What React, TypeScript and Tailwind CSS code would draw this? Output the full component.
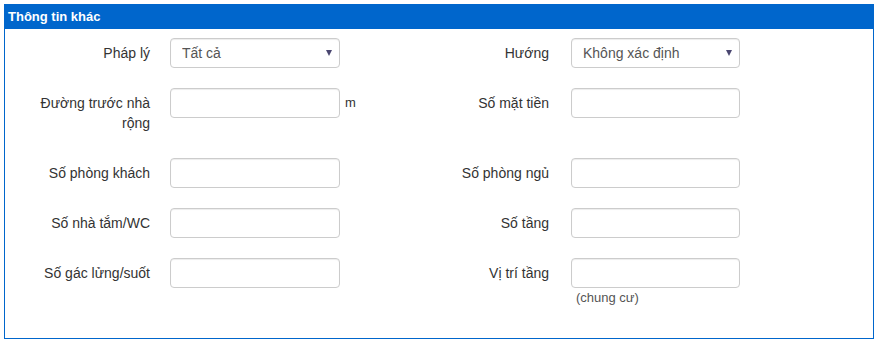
import React from 'react';

type Field = {
  label: string;
  kind?: 'select' | 'input';
  value?: string;
  suffix?: string;
  help?: string;
};

const rows: [Field, Field][] = [
  [
    { label: 'Pháp lý', kind: 'select', value: 'Tất cả' },
    { label: 'Hướng', kind: 'select', value: 'Không xác định' },
  ],
  [{ label: 'Đường trước nhà rộng', suffix: 'm' }, { label: 'Số mặt tiền' }],
  [{ label: 'Số phòng khách' }, { label: 'Số phòng ngủ' }],
  [{ label: 'Số nhà tắm/WC' }, { label: 'Số tầng' }],
  [{ label: 'Số gác lửng/suốt' }, { label: 'Vị trí tầng', help: '(chung cư)' }],
];

function Control({ field, width }: { field: Field; width: string }) {
  if (field.kind === 'select') {
    return (
      <div className={`relative h-[30px] ${width}`}>
        <select
          defaultValue={field.value}
          className="h-full w-full appearance-none rounded-[4px] border border-[#cccccc] bg-white pl-[11px] pr-6 text-[14px] leading-[20px] text-[#555555] shadow-[inset_0_1px_1px_rgba(0,0,0,0.075)] outline-none"
        >
          <option>{field.value}</option>
        </select>
        <span className="pointer-events-none absolute right-[8px] top-[12px] h-0 w-0 border-x-[3.5px] border-t-[6px] border-x-transparent border-t-[#4a4670]" />
      </div>
    );
  }
  return (
    <input
      type="text"
      className={`h-[30px] ${width} rounded-[4px] border border-[#cccccc] bg-white px-[10px] text-[14px] text-[#555555] shadow-[inset_0_1px_1px_rgba(0,0,0,0.075)] outline-none`}
    />
  );
}

function FieldGroup({ field, labelW, gap, inputW }: { field: Field; labelW: string; gap: string; inputW: string }) {
  return (
    <div className="flex items-start">
      <label className={`${labelW} shrink-0 py-[5px] pl-[15px] text-right text-[14px] leading-[20px] text-[#333333]`}>
        {field.label}
      </label>
      <div className={`${gap} flex flex-col`}>
        <div className="flex items-center">
          <Control field={field} width={inputW} />
          {field.suffix && (
            <span className="ml-[5px] text-[13px] leading-[20px] text-[#333333]">{field.suffix}</span>
          )}
        </div>
        {field.help && (
          <span className="pl-[5px] text-[13px] leading-[20px] text-[#555555]">{field.help}</span>
        )}
      </div>
    </div>
  );
}

export default function App() {
  return (
    <div
      className="m-[4px] border border-[#0066cc] bg-white"
      style={{ fontFamily: '"Liberation Sans", Arial, sans-serif' }}
    >
      <div className="flex h-[24px] items-center bg-[#0066cc] pl-[3px] text-[13px] font-bold text-white">
        Thông tin khác
      </div>
      <div className="flex flex-col gap-[20px] pb-[30px] pt-[9px]">
        {rows.map(([left, right], i) => (
          <div key={i} className="grid grid-cols-[400px_1fr]">
            <FieldGroup field={left} labelW="w-[145px]" gap="ml-[20px]" inputW="w-[170px]" />
            <FieldGroup field={right} labelW="w-[144px]" gap="ml-[22px]" inputW="w-[169px]" />
          </div>
        ))}
      </div>
    </div>
  );
}
